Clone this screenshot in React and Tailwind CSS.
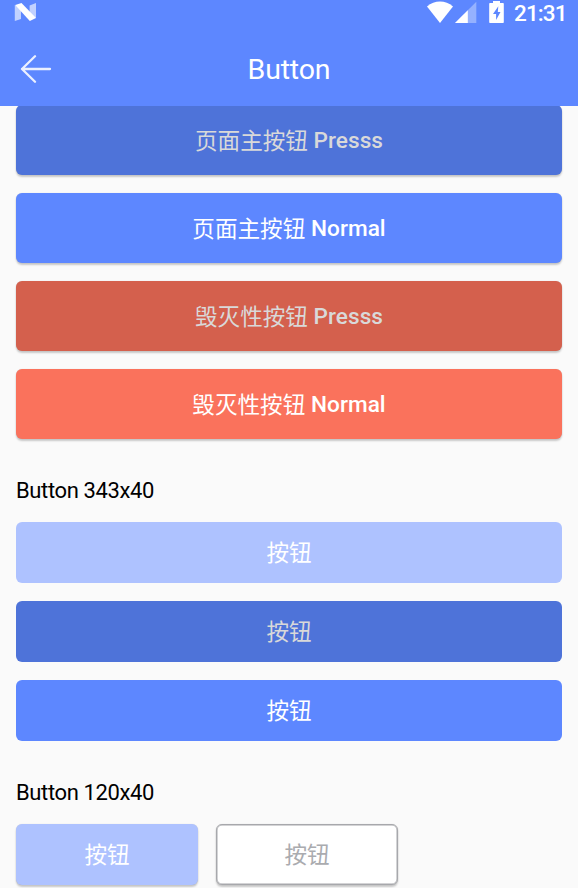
const RAISED = 'shadow-[0_2px_2px_rgba(0,0,0,0.2),0_0_1px_rgba(0,0,0,0.16)]';

function Button({ label, suffix, className }) {
  return (
    <button
      className={`flex shrink-0 items-center justify-center rounded-md text-[22.6px] leading-none whitespace-pre font-medium ${className}`}
    >
      <span className="font-['Noto_Sans_CJK_SC',sans-serif] font-normal">{label}</span>
      {suffix && <span className="pt-[2px] tracking-[0.04px]">{' ' + suffix}</span>}
    </button>
  );
}

function StatusBar() {
  return (
    <div className="flex h-[26px] items-start text-white">
      <svg className="mt-[3px] ml-[14px] h-[19px] w-[23px]" viewBox="0 0 23 19" fill="#fff">
        <path d="M.8 2.1 7 5.5V16L.8 18zM22 0v15L15.6 13V2.6z" opacity=".62" />
        <path d="M1.2 2.1 7.5 0 22 15 15.8 18z" />
      </svg>
      <div className="flex-1" />
      <svg className="mt-[1px] h-[23px] w-[28px]" viewBox="0 0 28 23" fill="#fff">
        <path d="M1 5.4C8.5-1 19.5-1 27 5.4L14 22z" />
      </svg>
      <svg className="mt-[1px] ml-[1px] h-[23px] w-[22px]" viewBox="0 0 22 23" fill="#fff">
        <path d="M21.3.8V22H0z" opacity=".35" />
        <path d="M12.8 9.3V22H0z" />
      </svg>
      <svg className="mt-[1px] ml-3 h-[23px] w-[15px]" viewBox="0 0 15 23">
        <path
          d="M1 2h3V0h7v2h3q.8 0 .8.8v18.4q0 .8-.8.8H1q-.8 0-.8-.8V2.800Q.2 2 1 2z"
          fill="#fff"
        />
        <path d="M9.300 5.200 4 12.900h3.100v6.200L11.500 11H8.800z" fill="#5d87ff" />
      </svg>
      <span className="ml-[10px] w-[64px] text-[22.5px] leading-[26px] font-medium tracking-[-0.9px]">21:31</span>
    </div>
  );
}

function SectionLabel({ children }) {
  return <h2 className="text-[22px] leading-[26px] tracking-[-0.38px] text-black">{children}</h2>;
}

export default function App() {
  return (
    <div className="flex h-[888px] w-[578px] flex-col overflow-hidden bg-[#fafafa] font-[Roboto,'Noto_Sans_CJK_SC',sans-serif]">
      <header className="h-[106px] shrink-0 bg-[#5d87ff] text-white">
        <StatusBar />
        <div className="grid h-[80px] grid-cols-[1fr_auto_1fr] items-center">
          <svg
            className="mt-[5px] ml-5 h-[28px] w-8"
            viewBox="0 0 32 28"
            fill="none"
            stroke="#fff"
            strokeOpacity=".88"
            strokeWidth="2.3"
            strokeLinecap="round"
            strokeLinejoin="round"
          >
            <path d="M30 14H2M15 1.300 2 14l13 12.700" />
          </svg>
          <h1 className="mt-2 text-[28.500px] leading-9 tracking-[-0.15px]">Button</h1>
        </div>
      </header>
      <main className="flex min-h-0 flex-1 flex-col overflow-hidden px-4">
        <div className="-mt-[1px] flex flex-col gap-[18px]">
          <Button label="页面主按钮" suffix="Presss" className={`h-[70px] bg-[#4e73d9] text-[#d9d9d9] ${RAISED}`} />
          <Button label="页面主按钮" suffix="Normal" className={`h-[70px] bg-[#5d87ff] text-white ${RAISED}`} />
          <Button label="毁灭性按钮" suffix="Presss" className={`h-[70px] bg-[#d4604d] text-[#d9d9d9] ${RAISED}`} />
          <Button label="毁灭性按钮" suffix="Normal" className={`h-[70px] bg-[#fa725c] text-white ${RAISED}`} />
        </div>
        <div className="mt-[39px] flex flex-col gap-[18px]">
          <SectionLabel>Button 343x40</SectionLabel>
          <Button label="按钮" className="h-[61px] bg-[#aec2ff] text-white" />
          <Button label="按钮" className="h-[61px] bg-[#4e73d9] text-[#d9d9d9]" />
          <Button label="按钮" className="h-[61px] bg-[#5d87ff] text-white" />
        </div>
        <div className="mt-[39px] flex flex-col gap-[18px]">
          <SectionLabel>Button 120x40</SectionLabel>
          <div className="flex gap-[18px]">
            <Button label="按钮" className={`h-[61px] w-[182px] bg-[#aec2ff] text-white ${RAISED}`} />
            <Button label="按钮" className={`h-[61px] w-[182px] border border-[#a7a8ac] bg-white text-[#aaabaf] inset-ring-[0.5px] inset-ring-[#a7a8ac] ${RAISED}`} />
          </div>
        </div>
      </main>
    </div>
  );
}
